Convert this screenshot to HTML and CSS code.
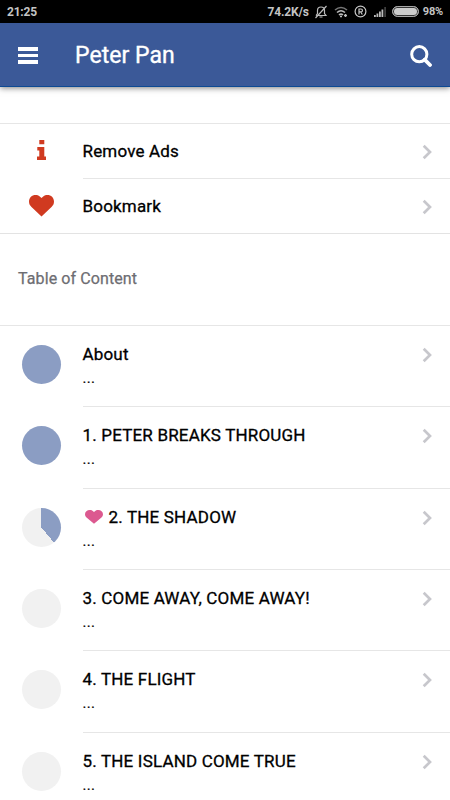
FILE: index.html
```html
<!DOCTYPE html>
<html lang="en">
<head>
<meta charset="utf-8">
<title>Peter Pan</title>
<link rel="stylesheet" href="styles.css">
</head>
<body>
<svg class="defs" width="0" height="0" aria-hidden="true">
  <symbol id="chevron" viewBox="0 0 10 16"><path d="M1.700 1.700 8 8 1.700 14.300" fill="none" stroke="#c7c7cc" stroke-width="2.700"/></symbol>
  <symbol id="heart" viewBox="0 0 25 22"><path d="M12.5 3C10 .3 8.500 0 6.500 0C3 0 0 2.700 0 6.500C0 9 1 10.500 2.500 12L12.500 21.500L22.500 12C24 10.500 25 9 25 6.500C25 2.700 22 0 18.500 0C16.500 0 15 .3 12.500 3Z" fill="currentColor"/></symbol>
</svg>
<div class="status">
  <span class="clock">21:25</span>
  <span class="speed">74.2K/s</span>
  <svg class="bell" width="14" height="14" viewBox="0 0 14 14" fill="none" stroke="#bbb" stroke-width="1.2"><path d="M2 10.500H12L10.500 8.500V5.500C10.500 3.500 9 2 7 2S3.500 3.500 3.500 5.500V8.500L2 10.500M5.500 12H8.500M1.500 13 12.500 1"/></svg>
  <svg class="wifi" width="15" height="12" viewBox="0 0 15 12" fill="none" stroke="#bbb" stroke-width="1.6"><path d="M1 4Q7 -1 13 4" stroke="#777"/><path d="M3 6.500Q7 3 11 6.500M5 9Q7 7.200 9 9"/><path d="M6 10.500H8M11.500 8V11M10 9.500H13" stroke-width="1.300"/></svg>
  <svg class="reg" width="13" height="13" viewBox="0 0 13 13" fill="none" stroke="#c8c8c8" stroke-width="1.200"><circle cx="6.500" cy="6.500" r="5.400"/><path d="M5 9.500V4H7A1.400 1.400 0 0 1 7 6.900H5M6.800 7 8.300 9.500"/></svg>
  <svg class="signal" width="14" height="10" viewBox="0 0 14 10" fill="#bbb"><path d="M1 8h1.800v2H1zM3.500 6.500h1.800V10H3.500zM6 4.500h1.800V10H6zM8.500 2.500h1.800V10H8.500z"/><path d="M11.300 0h1.600v10h-1.600z" fill="#444"/></svg>
  <span class="battery"></span>
  <span class="percent">98%</span>
</div>
<header class="bar">
  <div class="menu"><i></i><i></i><i></i></div>
  <h1>Peter Pan</h1>
  <svg class="search" width="22" height="22" viewBox="0 0 22 22" fill="none" stroke="#fff"><circle cx="9.300" cy="9.200" r="7.600" stroke-width="3"/><path d="M14.700 14.700 20 20" stroke-width="3.800" stroke-linecap="round"/></svg>
</header>
<main>
  <ul class="list actions">
    <li><div class="media"><svg class="info" width="9" height="20" viewBox="0 0 9 20"><path d="M2.300 0h5v4.200h-5zM.3 7h7v9.600H9V20H0v-3.400h2.300v-6.200H.3z" fill="currentColor"/></svg></div><div class="content"><span class="title">Remove Ads</span><svg class="chevron"><use href="#chevron"/></svg></div></li>
    <li><div class="media"><svg width="25" height="22"><use href="#heart"/></svg></div><div class="content"><span class="title">Bookmark</span><svg class="chevron"><use href="#chevron"/></svg></div></li>
  </ul>
  <h2>Table of Content</h2>
  <ul class="list chapters">
    <li><div class="media"><span class="pie full"></span></div><div class="content"><div><div class="title">About</div><p>...</p></div><svg class="chevron"><use href="#chevron"/></svg></div></li>
    <li><div class="media"><span class="pie full"></span></div><div class="content"><div><div class="title">1. PETER BREAKS THROUGH</div><p>...</p></div><svg class="chevron"><use href="#chevron"/></svg></div></li>
    <li><div class="media"><span class="pie part"></span></div><div class="content"><div><div class="title"><svg class="fav" viewBox="0 0 25 22" preserveAspectRatio="none"><use href="#heart" width="25" height="22"/></svg>2. THE SHADOW</div><p>...</p></div><svg class="chevron"><use href="#chevron"/></svg></div></li>
    <li><div class="media"><span class="pie"></span></div><div class="content"><div><div class="title">3. COME AWAY, COME AWAY!</div><p>...</p></div><svg class="chevron"><use href="#chevron"/></svg></div></li>
    <li><div class="media"><span class="pie"></span></div><div class="content"><div><div class="title">4. THE FLIGHT</div><p>...</p></div><svg class="chevron"><use href="#chevron"/></svg></div></li>
    <li><div class="media"><span class="pie"></span></div><div class="content"><div><div class="title">5. THE ISLAND COME TRUE</div><p>...</p></div><svg class="chevron"><use href="#chevron"/></svg></div></li>
  </ul>
</main>
</body>
</html>
```
FILE: styles.css
```css
* { box-sizing: border-box; }
body { margin: 0; height: 800px; overflow: hidden; background: #fff; color: #000; font-family: Roboto, sans-serif; }
.defs { display: none; }
.status { display: flex; align-items: center; height: 23px; padding: 0 7px; background: #000; color: #c4c4c4; font-size: 12px; font-weight: 700; }
.clock { margin-right: auto; letter-spacing: -.2px; }
.speed { letter-spacing: -.15px; }
.bell { margin-left: 5px; }
.wifi { margin-left: 6px; }
.reg { margin-left: 5px; }
.signal { margin-left: 6px; }
.battery { width: 27px; height: 11px; margin: 0 4px 0 5px; border: 1px solid #a8a8a8; border-radius: 6px; background: #ccc; box-shadow: inset 0 0 0 1px #333; }
.percent { font-size: 11px; letter-spacing: -.2px; }
.bar { display: flex; align-items: center; height: 64px; padding: 2px 18px 0; background: #3b5998; border-bottom: 1px solid #0d4a94; box-shadow: 0 1px 6px rgba(0,0,0,.5); color: #fff; }
.menu { display: flex; flex-direction: column; gap: 3px; width: 20px; margin-right: 37px; }
.menu i { height: 3.500px; background: #fff; }
h1 { margin: 0 auto 0 0; font-size: 23px; font-weight: 400; letter-spacing: .05px; -webkit-text-stroke: .35px #fff; }
.search { margin-top: 1px; }
.list { list-style: none; margin: 0; padding: 0; border-top: 1px solid #e6e6e6; }
.list li { display: flex; }
.media { display: flex; flex: none; width: 82.500px; color: #d03a20; }
.content { display: flex; flex: 1; justify-content: space-between; border-bottom: 1px solid #e6e6e6; padding-right: 18px; }
.title { font-size: 17px; font-weight: 400; line-height: 22px; letter-spacing: .18px; -webkit-text-stroke: .3px #000; }
.chevron { width: 10px; height: 16px; flex: none; }
.actions { margin-top: 36px; border-bottom: 1px solid #e3e3e3; }
.actions li { height: 55px; }
.actions li:last-child { height: 54px; }
.actions li:last-child .content { border-bottom: 0; }
.actions .media { align-items: center; justify-content: center; }
.actions .content { align-items: center; }
.actions .chevron { margin-top: 1px; }
.info { margin-bottom: 4px; }
.actions li:last-child .media { padding-bottom: 1px; }
h2 { margin: 34px 18px 36px; font-size: 16px; font-weight: 400; line-height: 21px; letter-spacing: .1px; color: #6d6d72; -webkit-text-stroke: .25px #6d6d72; }
.chapters li { height: 81.330px; }
.chapters .media { padding: 19px 0 0 22px; }
.chapters .content { padding-top: 17px; }
.chapters .chevron { margin-top: 4px; }
.pie { width: 39px; height: 39px; border-radius: 50%; background: #f1f1f1; }
.pie.full { background: #8b9dc3; }
.pie.part { background: conic-gradient(#8b9dc3 0 39%, #f1f1f1 39%); }
.chapters p { margin: 3px 0 0; font-size: 15px; line-height: 21px; letter-spacing: .25px; -webkit-text-stroke: .2px #000; }
.fav { width: 18px; height: 14px; margin: 0 6px 0 2px; color: #dc5990; vertical-align: -1px; }
```
